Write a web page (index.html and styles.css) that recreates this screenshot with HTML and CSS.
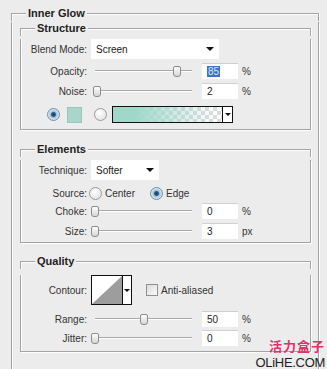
FILE: index.html
```html
<!DOCTYPE html>
<html>
<head>
  <title>Inner Glow</title>
  <link rel="stylesheet" href="styles.css">
</head>
<body>
  <div class="panel">
    <section class="group outer">
      <div class="group-title"><i class="edge-l"></i><span>Inner Glow</span><i class="edge-r"></i></div>
      <div class="group-body">

        <section class="group structure">
          <div class="group-title"><i class="edge-l"></i><span>Structure</span><i class="edge-r"></i></div>
          <div class="group-body">
            <div class="row r-blend">
              <label class="lbl">Blend Mode:</label>
              <div class="select blend"><span>Screen</span><i class="arrow"></i></div>
            </div>
            <div class="row r-opacity">
              <label class="lbl">Opacity:</label>
              <div class="slider"><div class="track"><div class="thumb" style="left:85%"></div></div></div>
              <div class="num"><span class="hilite">85</span></div>
              <span class="unit">%</span>
            </div>
            <div class="row r-noise">
              <label class="lbl">Noise:</label>
              <div class="slider"><div class="track"><div class="thumb" style="left:2%"></div></div></div>
              <div class="num">2</div>
              <span class="unit">%</span>
            </div>
            <div class="row r-color">
              <span class="radio checked"></span>
              <span class="swatch"></span>
              <span class="radio second"></span>
              <div class="gradient">
                <span class="grad-fill"></span>
                <span class="grad-btn"><i class="arrow small"></i></span>
              </div>
            </div>
          </div>
        </section>

        <section class="group elements">
          <div class="group-title"><i class="edge-l"></i><span>Elements</span><i class="edge-r"></i></div>
          <div class="group-body">
            <div class="row r-tech">
              <label class="lbl">Technique:</label>
              <div class="select tech"><span>Softer</span><i class="arrow"></i></div>
            </div>
            <div class="row r-source">
              <label class="lbl">Source:</label>
              <span class="radio tight"></span>
              <span class="opt">Center</span>
              <span class="radio checked edge"></span>
              <span class="opt">Edge</span>
            </div>
            <div class="row r-choke">
              <label class="lbl">Choke:</label>
              <div class="slider"><div class="track"><div class="thumb" style="left:0%"></div></div></div>
              <div class="num">0</div>
              <span class="unit">%</span>
            </div>
            <div class="row r-size">
              <label class="lbl">Size:</label>
              <div class="slider"><div class="track"><div class="thumb" style="left:0%"></div></div></div>
              <div class="num">3</div>
              <span class="unit">px</span>
            </div>
          </div>
        </section>

        <section class="group quality">
          <div class="group-title"><i class="edge-l"></i><span>Quality</span><i class="edge-r"></i></div>
          <div class="group-body">
            <div class="row r-contour">
              <label class="lbl">Contour:</label>
              <div class="contour">
                <svg class="curve" width="30" height="28" viewBox="0 0 30 28">
                  <rect width="30" height="28" fill="#fff"/>
                  <polygon points="0,28 30,0 30,28" fill="#9d9d9d"/>
                </svg>
                <span class="contour-btn"><i class="arrow small"></i></span>
              </div>
              <span class="check"></span>
              <span class="opt">Anti-aliased</span>
            </div>
            <div class="row r-range">
              <label class="lbl">Range:</label>
              <div class="slider"><div class="track"><div class="thumb" style="left:50%"></div></div></div>
              <div class="num">50</div>
              <span class="unit">%</span>
            </div>
            <div class="row r-jitter">
              <label class="lbl">Jitter:</label>
              <div class="slider"><div class="track"><div class="thumb" style="left:0%"></div></div></div>
              <div class="num">0</div>
              <span class="unit">%</span>
            </div>
          </div>
        </section>

      </div>
    </section>

    <div class="mark">
      <div class="mark-cn">活力盒子</div>
      <div class="mark-en">OLiHE.COM</div>
    </div>
  </div>
</body>
</html>
```

FILE: styles.css
```css
body {
  margin: 0;
  background-color: #ececec;
  font-family: "Liberation Sans", Arial, sans-serif;
  font-size: 10px;
  color: #333;
}

.panel {
  position: relative;
  height: 369px;
  overflow: hidden;
  padding: 7px 8px 0 11px;
  box-sizing: border-box;
}

/* group boxes: title line + framed body */
.group-title {
  display: flex;
  height: 13px;
  line-height: 13px;
  font-size: 11px;
  font-weight: bold;
  color: #222;
}

.group-title span {
  flex: none;
  padding: 0 2px;
}

.edge-l,
.edge-r {
  display: block;
  align-self: flex-start;
  height: 7px;
  margin-top: 6px;
  border-top: 1px solid #a3a3a3;
}

.edge-l {
  flex: 0 0 14px;
  border-left: 1px solid #a3a3a3;
  box-shadow: inset 1px 1px 0 #fff;
}

.edge-r {
  flex: 1 1 auto;
  border-right: 1px solid #a3a3a3;
  box-shadow: inset 0 1px 0 #fff, 1px 0 0 #fff;
}

.group-body {
  border: 1px solid #a3a3a3;
  border-top: none;
  box-shadow: inset 1px 0 0 #fff, 1px 1px 0 #fff;
}

.outer > .group-body {
  height: 420px;
}

.structure {
  margin: 2px 7px 0 8px;
}

.structure .group-body {
  padding-bottom: 3px;
}

.elements {
  margin: 13px 7px 0 8px;
}

.elements .group-body {
  padding-bottom: 2px;
}

.quality {
  margin: 12px 7px 0 8px;
}

.quality .group-body {
  padding-bottom: 4px;
}

/* rows */
.row {
  display: flex;
  align-items: center;
  height: 18px;
}

.lbl {
  width: 66px;
  text-align: right;
  flex-shrink: 0;
  white-space: nowrap;
}

.r-blend { margin-top: 4px; height: 20px; }
.r-opacity { margin-top: 2px; height: 20px; }
.r-noise { height: 20px; }
.r-color { margin-top: 2px; height: 23px; }

.r-tech { margin-top: 4px; height: 20px; }
.r-source { margin-top: 4px; }
.r-size { margin-top: 2px; }

.r-contour { margin-top: 7px; height: 30px; }
.r-range { margin-top: 5px; }
.r-jitter { margin-top: 1px; }

/* select */
.select {
  margin-left: 4px;
  height: 20px;
  background-color: #fff;
  display: flex;
  align-items: center;
  justify-content: space-between;
  padding: 0 5px 0 5px;
  box-sizing: border-box;
  color: #222;
}

.select.blend { width: 128px; }
.select.tech { width: 68px; }

.arrow {
  display: block;
  width: 0;
  height: 0;
  border-left: 4px solid transparent;
  border-right: 4px solid transparent;
  border-top: 4px solid #111;
}

.arrow.small {
  border-left-width: 3px;
  border-right-width: 3px;
  border-top-width: 3px;
}

/* slider */
.slider {
  margin-left: 4px;
  width: 105px;
  height: 12px;
  padding: 0 4px;
  box-sizing: border-box;
}

.track {
  position: relative;
  height: 12px;
}

.track::before {
  content: "";
  position: absolute;
  left: 0;
  right: 0;
  top: 5px;
  border-top: 1px solid #a8a8a8;
  border-bottom: 1px solid #fff;
}

.thumb {
  position: absolute;
  top: 1px;
  margin-left: -4px;
  width: 6px;
  height: 9px;
  border: 1px solid #8c8c8c;
  border-radius: 2px 2px 3px 3px;
  background: linear-gradient(#fdfdfd, #d6d6d6);
}

/* numeric fields */
.num {
  margin-left: 6px;
  width: 36px;
  height: 16px;
  box-sizing: border-box;
  background-color: #fff;
  border-top: 1px solid #d0d0d0;
  padding-left: 5px;
  line-height: 15px;
  color: #222;
}

.hilite {
  background-color: #3a74c4;
  color: #d9e6f6;
  padding: 0 1px;
}

.unit {
  margin-left: 4px;
}

/* radios and checks */
.radio {
  width: 11px;
  height: 11px;
  border-radius: 50%;
  border: 1px solid #9a9a9a;
  background: radial-gradient(circle at 40% 35%, #fff, #dcdcdc);
  box-sizing: content-box;
  flex-shrink: 0;
}

.radio.checked {
  background: radial-gradient(circle, #1b3f5c 0, #2f5e84 2px, #9fc2dc 3px, #e9f1f6 6px);
  border-color: #6f8fa6;
}

.r-color .radio.checked { margin-left: 26px; }
.radio.second { margin-left: 12px; }
.radio.tight { margin-left: 2px; }
.radio.edge { margin-left: 15px; }

.opt {
  margin-left: 3px;
}

.swatch {
  margin-left: 7px;
  width: 13px;
  height: 14px;
  background-color: #a8d6ca;
  border: 1px solid #99c7bb;
}

.gradient {
  margin-left: 5px;
  width: 121px;
  height: 17px;
  display: flex;
  border: 1px solid #111;
  box-sizing: border-box;
}

.grad-fill {
  flex: 1;
  background:
    linear-gradient(to right, #9fd8c9 20%, rgba(170, 218, 206, 0) 95%),
    repeating-conic-gradient(#dcdcdc 0 25%, #ffffff 0 50%) 0 0 / 8px 8px;
}

.grad-btn {
  width: 9px;
  border-left: 1px solid #111;
  background-color: #fff;
  display: flex;
  align-items: center;
  justify-content: center;
}

.contour {
  margin-left: 4px;
  width: 41px;
  height: 30px;
  display: flex;
  border: 1px solid #111;
  box-sizing: border-box;
}

.curve {
  display: block;
}

.contour-btn {
  flex: 1;
  border-left: 1px solid #111;
  background-color: #fff;
  display: flex;
  align-items: center;
  justify-content: center;
}

.check {
  margin-left: 14px;
  width: 10px;
  height: 10px;
  border: 1px solid #8f8f8f;
  background: linear-gradient(135deg, #dcdcdc, #fafafa);
}

/* watermark */
.mark {
  position: absolute;
  right: 2px;
  bottom: -1px;
  text-align: right;
}

.mark-cn {
  font-family: "Noto Sans CJK SC", sans-serif;
  font-weight: bold;
  font-size: 13px;
  line-height: 19px;
  letter-spacing: 1px;
  color: #e3306d;
}

.mark-en {
  font-size: 13px;
  line-height: 15px;
  color: #1e1e1e;
  letter-spacing: -0.3px;
}
```
